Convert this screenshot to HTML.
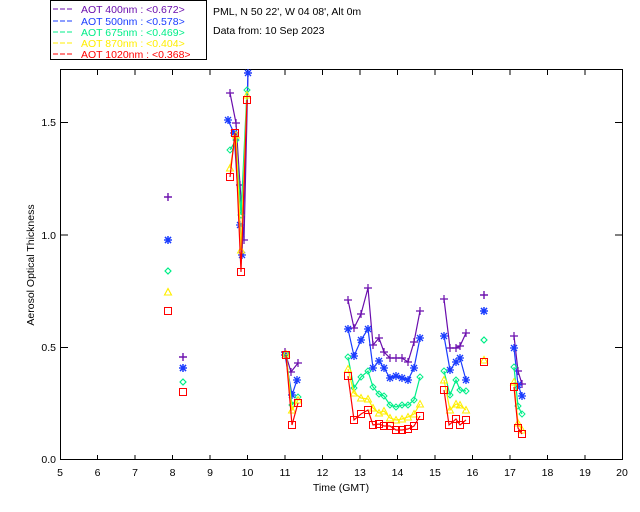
<!DOCTYPE html>
<html><head><meta charset="utf-8"><style>
html,body{margin:0;padding:0;background:#fff;width:640px;height:512px;overflow:hidden}
svg{display:block}
text{font-family:"Liberation Sans",sans-serif;font-size:10.5px}
</style></head><body>
<svg width="640" height="512" viewBox="0 0 640 512">
<defs>
<marker id="mp" markerWidth="10" markerHeight="10" refX="5" refY="5" markerUnits="userSpaceOnUse"><path d="M1 5H9M5 1V9" stroke="#6a0dad" stroke-width="1.2" fill="none"/></marker>
<marker id="mb" markerWidth="10" markerHeight="10" refX="5" refY="5" markerUnits="userSpaceOnUse"><path d="M1 5H9M5 1V9M2 2L8 8M8 2L2 8" stroke="#1a3cff" stroke-width="1.3" fill="none"/></marker>
<marker id="mg" markerWidth="10" markerHeight="10" refX="5" refY="5" markerUnits="userSpaceOnUse"><path d="M5 2L8 5L5 8L2 5Z" stroke="#00ee88" fill="none"/></marker>
<marker id="my" markerWidth="10" markerHeight="10" refX="5" refY="5" markerUnits="userSpaceOnUse"><path d="M5 1.5L8.5 8H1.5Z" stroke="#ffee00" fill="none"/></marker>
<marker id="mr" markerWidth="10" markerHeight="10" refX="5" refY="5" markerUnits="userSpaceOnUse"><rect x="1.5" y="1.5" width="7" height="7" stroke="#ff0000" fill="none"/></marker>
</defs>
<rect x="50.5" y="0.5" width="156" height="59" fill="none" stroke="#000"/>
<g font-size="10.5" xml:space="preserve" style="white-space:pre">
<line x1="53" y1="9" x2="72" y2="9" stroke="#6a0dad" stroke-dasharray="5,2"/><text x="81" y="13" fill="#6a0dad">AOT   400nm : &lt;0.672&gt;</text>
<line x1="53" y1="21" x2="72" y2="21" stroke="#1a3cff" stroke-dasharray="5,2"/><text x="81" y="25" fill="#1a3cff">AOT   500nm : &lt;0.578&gt;</text>
<line x1="53" y1="32" x2="72" y2="32" stroke="#00ee88" stroke-dasharray="5,2"/><text x="81" y="36" fill="#00ee88">AOT   675nm : &lt;0.469&gt;</text>
<line x1="53" y1="43" x2="72" y2="43" stroke="#ffee00" stroke-dasharray="5,2"/><text x="81" y="47" fill="#ffee00">AOT   870nm : &lt;0.404&gt;</text>
<line x1="53" y1="54" x2="72" y2="54" stroke="#ff0000" stroke-dasharray="5,2"/><text x="81" y="58" fill="#ff0000">AOT 1020nm : &lt;0.368&gt;</text>
</g>
<text x="213" y="15">PML, N 50 22', W 04 08', Alt 0m</text>
<text x="213" y="34">Data from: 10 Sep 2023</text>
<rect x="60.5" y="69.5" width="562" height="390" fill="none" stroke="#000"/>
<g stroke="#000">
<path d="M97.5 460v-5M135 460v-5M172.5 460v-5M210 460v-5M247.5 460v-5M285 460v-5M322.5 460v-5M360 460v-5M397.5 460v-5M435 460v-5M472.5 460v-5M510 460v-5M547.5 460v-5M585 460v-5"/>
<path d="M97.5 70v5M135 70v5M172.5 70v5M210 70v5M247.5 70v5M285 70v5M322.5 70v5M360 70v5M397.5 70v5M435 70v5M472.5 70v5M510 70v5M547.5 70v5M585 70v5"/>
<path d="M60 347.5h8M60 235h8M60 122.5h8M615 347.5h8M615 235h8M615 122.5h8"/>
</g>
<g text-anchor="middle">
<text x="60" y="476">5</text><text x="97.5" y="476">6</text><text x="135" y="476">7</text><text x="172.5" y="476">8</text><text x="210" y="476">9</text><text x="247.5" y="476">10</text><text x="285" y="476">11</text><text x="322.5" y="476">12</text><text x="360" y="476">13</text><text x="397.5" y="476">14</text><text x="435" y="476">15</text><text x="472.5" y="476">16</text><text x="510" y="476">17</text><text x="547.5" y="476">18</text><text x="585" y="476">19</text><text x="622" y="476">20</text>
<text x="341" y="491">Time (GMT)</text>
</g>
<g text-anchor="end"><text x="56" y="463">0.0</text><text x="56" y="351">0.5</text><text x="56" y="239">1.0</text><text x="56" y="126">1.5</text></g>
<text transform="translate(34,265) rotate(-90)" text-anchor="middle" font-size="9.5">Aerosol Optical Thickness</text>
<g fill="none" stroke-width="1.2">
<g stroke="#6a0dad" marker-start="url(#mp)" marker-mid="url(#mp)" marker-end="url(#mp)">
<polyline points="168,197 168,197"/><polyline points="183,357 183,357"/>
<polyline points="230,93 236,123 240,185 244,240 248,73"/>
<polyline points="285,352 291,372 298,363"/>
<polyline points="348,300 354,328 361,314 368,288 373,345 379,338 384,352 390,358 396,358 402,358 408,362 414,342 420,311"/>
<polyline points="444,299 450,348 456,348 460,346 466,333"/><polyline points="484,295 484,295"/>
<polyline points="514,336 518,371 522,384"/>
</g>
<g stroke="#1a3cff" marker-start="url(#mb)" marker-mid="url(#mb)" marker-end="url(#mb)">
<polyline points="168,240 168,240"/><polyline points="183,368 183,368"/>
<polyline points="228,120 234,133 240,225 242,255 248,73"/>
<polyline points="285,355 292,395 297,380"/>
<polyline points="348,329 354,356 361,340 368,329 373,368 379,361 384,368 390,378 396,376 402,378 408,380 414,368 420,338"/>
<polyline points="444,336 450,370 456,362 460,358 466,380"/><polyline points="484,311 484,311"/>
<polyline points="514,348 518,385 522,396"/>
</g>
<g stroke="#00ee88" marker-start="url(#mg)" marker-mid="url(#mg)" marker-end="url(#mg)">
<polyline points="168,271 168,271"/><polyline points="183,382 183,382"/>
<polyline points="230,150 236,140 241,215 247,90"/>
<polyline points="286,354 292,405 298,397"/>
<polyline points="348,357 354,388 361,377 368,371 373,387 379,394 384,396 390,405 396,407 402,405 408,405 414,400 420,377"/>
<polyline points="444,371 450,395 456,380 460,390 466,391"/><polyline points="484,340 484,340"/>
<polyline points="514,367 518,406 522,414"/>
</g>
<g stroke="#ffee00" marker-start="url(#my)" marker-mid="url(#my)" marker-end="url(#my)">
<polyline points="168,292 168,292"/>
<polyline points="230,168 236,135 241,250 247,95"/>
<polyline points="286,354 292,410 298,400"/>
<polyline points="348,369 354,393 361,398 368,399 373,408 379,413 384,411 390,418 396,420 402,419 408,417 414,414 420,404"/>
<polyline points="444,380 450,410 456,404 460,405 466,410"/><polyline points="484,360 484,360"/>
<polyline points="514,382 518,423 522,430"/>
</g>
<g stroke="#ff0000" marker-start="url(#mr)" marker-mid="url(#mr)" marker-end="url(#mr)">
<polyline points="168,311 168,311"/><polyline points="183,392 183,392"/>
<polyline points="230,177 235,133 241,272 247,100"/>
<polyline points="286,355 292,425 298,403"/>
<polyline points="348,376 354,420 361,414 368,410 373,425 379,424 384,426 390,426 396,430 402,430 408,429 414,426 420,416"/>
<polyline points="444,390 449,425 456,419 460,425 466,420"/><polyline points="484,362 484,362"/>
<polyline points="514,387 518,428 522,434"/>
</g>
</g>
</svg>
</body></html>
